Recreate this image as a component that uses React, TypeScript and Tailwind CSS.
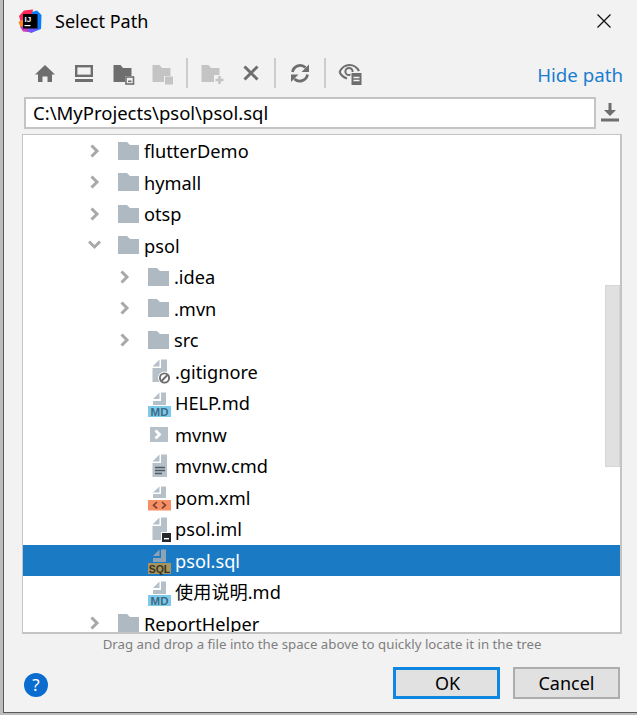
import React from 'react';

const FONT = "font-['Noto_Sans','Noto_Sans_CJK_SC',sans-serif]";

type Kind = 'folder' | 'ignore' | 'md' | 'shell' | 'cmd' | 'xml' | 'iml' | 'sql';

interface TreeRow {
  name: string;
  depth: 0 | 1;
  kind: Kind;
  arrow?: 'right' | 'down';
  selected?: boolean;
}

const rows: TreeRow[] = [
  { name: 'flutterDemo', depth: 0, kind: 'folder', arrow: 'right' },
  { name: 'hymall', depth: 0, kind: 'folder', arrow: 'right' },
  { name: 'otsp', depth: 0, kind: 'folder', arrow: 'right' },
  { name: 'psol', depth: 0, kind: 'folder', arrow: 'down' },
  { name: '.idea', depth: 1, kind: 'folder', arrow: 'right' },
  { name: '.mvn', depth: 1, kind: 'folder', arrow: 'right' },
  { name: 'src', depth: 1, kind: 'folder', arrow: 'right' },
  { name: '.gitignore', depth: 1, kind: 'ignore' },
  { name: 'HELP.md', depth: 1, kind: 'md' },
  { name: 'mvnw', depth: 1, kind: 'shell' },
  { name: 'mvnw.cmd', depth: 1, kind: 'cmd' },
  { name: 'pom.xml', depth: 1, kind: 'xml' },
  { name: 'psol.iml', depth: 1, kind: 'iml' },
  { name: 'psol.sql', depth: 1, kind: 'sql', selected: true },
  { name: '使用说明.md', depth: 1, kind: 'md' },
  { name: 'ReportHelper', depth: 0, kind: 'folder', arrow: 'right' },
];

const Page = ({ bottom, fill = '#b6c0c8' }: { bottom: number; fill?: string }) => (
  <>
    <path d={`M14 1.5H20V${bottom}H5.5V10H14Z`} fill={fill} />
    <path d="M5.5 8.5L12.5 1.5V8.5Z" fill={fill} />
  </>
);

const FileIcon = ({ kind }: { kind: Kind }) => {
  const cls = 'w-[24px] h-[26px] shrink-0 overflow-visible';
  if (kind === 'folder') {
    return (
      <svg viewBox="0 0 24 26" className={cls}>
        <path d="M1 4H10L13 7H22V22H1Z" fill="#afb9c1" />
      </svg>
    );
  }
  if (kind === 'shell') {
    return (
      <svg viewBox="0 0 24 26" className={cls}>
        <rect x="3" y="6" width="18" height="15" fill="#b6c0c8" />
        <path d="M8.5 9.5L12.5 13.5L8.5 17.5" fill="none" stroke="#fff" strokeWidth="2.8" />
      </svg>
    );
  }
  if (kind === 'cmd') {
    return (
      <svg viewBox="0 0 24 26" className={cls}>
        <Page bottom={24} />
        <path d="M8 14.5H18M8 17.5H18M8 20.5H15" stroke="#4f5a63" strokeWidth="1.3" />
      </svg>
    );
  }
  if (kind === 'ignore') {
    return (
      <svg viewBox="0 0 24 26" className={cls}>
        <Page bottom={24} />
        <circle cx="17.5" cy="20" r="6.5" fill="#fff" />
        <circle cx="17.5" cy="20" r="4.6" fill="none" stroke="#6c6c6c" strokeWidth="1.9" />
        <path d="M14.5 23L20.5 17" stroke="#6c6c6c" strokeWidth="1.9" />
      </svg>
    );
  }
  if (kind === 'iml') {
    return (
      <svg viewBox="0 0 24 26" className={cls}>
        <Page bottom={24} />
        <rect x="14" y="16" width="11" height="10" fill="#fff" />
        <rect x="15" y="17" width="9" height="9" fill="#26292c" />
        <rect x="17" y="22" width="5" height="1.4" fill="#fff" />
      </svg>
    );
  }
  if (kind === 'xml') {
    return (
      <svg viewBox="0 0 24 26" className={cls}>
        <path d="M14 2.5H19V14H6V10H14Z" fill="#b6c0c8" />
        <path d="M6 8.5L12.5 2.5V8.5Z" fill="#b6c0c8" />
        <rect x="1" y="16" width="23" height="10.5" fill="#f58f65" />
        <path d="M10 18L6.5 21.2L10 24.4M15 18L18.5 21.2L15 24.4" fill="none" stroke="#7c4128" strokeWidth="1.6" />
      </svg>
    );
  }
  const sql = kind === 'sql';
  return (
    <svg viewBox="0 0 24 26" className={cls}>
      <path d="M14 2.5H19V15H6V11H14Z" fill={sql ? '#8fa3b5' : '#b6c0c8'} />
      <path d="M6 9L12.5 2.5V9Z" fill={sql ? '#8fa3b5' : '#b6c0c8'} />
      <rect x="1" y="16" width="23" height="11" fill={sql ? '#a8945f' : '#7ecbe9'} />
      <text
        x="12.5"
        y="25.5"
        textAnchor="middle"
        fontFamily="Liberation Sans, sans-serif"
        fontWeight="700"
        fontSize={sql ? 10.5 : 11.5}
        fill={sql ? '#3a3522' : '#3d6a86'}
      >
        {sql ? 'SQL' : 'MD'}
      </text>
    </svg>
  );
};

const Arrow = ({ dir }: { dir?: 'right' | 'down' }) => (
  <span className="w-[14px] h-[14px] mr-[15px] shrink-0">
    {dir && (
      <svg viewBox="0 0 14 14" className="w-[14px] h-[14px]">
        <path
          d={dir === 'right' ? 'M3.5 1.5L9 7L3.5 12.5' : 'M1 3.5L6.5 9L12 3.5'}
          fill="none"
          stroke="#a8a8a8"
          strokeWidth="3"
        />
      </svg>
    )}
  </span>
);

const ToolIcon = ({ children }: { children: React.ReactNode }) => (
  <span className="w-[39px] h-[24px] flex items-center justify-center shrink-0">
    <svg viewBox="0 0 24 24" className="w-[24px] h-[24px]">
      {children}
    </svg>
  </span>
);

const Logo = () => (
  <svg viewBox="0 0 24 24" className="w-[24px] h-[24px] shrink-0">
    <path d="M1 7L6 1.5L15 0.5L13 12L3 14Z" fill="#fe2857" />
    <path d="M0.5 13L6 10L8 21L2.5 18Z" fill="#fc801d" />
    <path d="M2 18L10 15L14 23.5L5 22.5Z" fill="#c53fb8" />
    <path d="M14 3L19 1.5L23.5 6L23 20L14 23.5Z" fill="#087cfa" />
    <path d="M9 21L14 16L21 20L13 24Z" fill="#6b57ff" />
    <rect x="5" y="5" width="14.5" height="14.5" fill="#000" />
    <text x="6.5" y="13" fontFamily="Liberation Sans, sans-serif" fontWeight="700" fontSize="8" fill="#fff">
      IJ
    </text>
    <rect x="6.5" y="16" width="6" height="1.2" fill="#fff" />
  </svg>
);

export default function App() {
  return (
    <div className={`w-[637px] h-[715px] bg-[#bdbdbd] pl-[3px] pb-[2px] overflow-hidden ${FONT}`}>
      <div className="h-full flex flex-col bg-[#f2f2f2] border-l border-b border-[#5a5a5a]">
        {/* title bar */}
        <div className="h-[42px] shrink-0 flex items-center pl-[14px] pr-[25px]">
          <Logo />
          <span className="ml-[13px] text-[18px] text-black">Select Path</span>
          <svg viewBox="0 0 16 16" className="w-[16px] h-[16px] ml-auto">
            <path d="M1.5 1.5L14.5 14.5M14.5 1.5L1.5 14.5" stroke="#111" strokeWidth="1.3" />
          </svg>
        </div>

        {/* toolbar */}
        <div className="h-[55px] shrink-0 pt-[7px] pl-[21px] pr-[14px] flex items-center">
          <ToolIcon>
            <path d="M2 13.5L12 4L22 13.5H19V21H14.5V15.5H9.5V21H5V13.5Z" fill="#6e6e6e" />
          </ToolIcon>
          <ToolIcon>
            <rect x="4.2" y="5.2" width="15.6" height="9.6" fill="none" stroke="#6e6e6e" strokeWidth="2.4" />
            <rect x="3" y="18" width="18" height="3" fill="#6e6e6e" />
          </ToolIcon>
          <ToolIcon>
            <path d="M2.5 4H9.5L12 7H20.5V15H14V21H2.5Z" fill="#6e6e6e" />
            <rect x="15" y="16" width="7.5" height="7" fill="none" stroke="#6e6e6e" strokeWidth="1.6" />
            <rect x="17" y="19.5" width="3.5" height="1.6" fill="#6e6e6e" />
          </ToolIcon>
          <ToolIcon>
            <path d="M2.5 4H9.5L12 7H20.5V15H14V21H2.5Z" fill="#c4c4c4" />
            <rect x="15" y="15.5" width="8" height="8" fill="#c4c4c4" />
          </ToolIcon>
          <span className="w-[2px] h-[30px] ml-[5px] mr-[4px] bg-[#cdcdcd] shrink-0" />
          <ToolIcon>
            <path d="M1.5 4H8.5L11 7H19.5V14H14V21H1.5Z" fill="#c4c4c4" />
            <path d="M19.5 15V23M15.5 19H23.5" stroke="#c4c4c4" strokeWidth="2.4" />
          </ToolIcon>
          <ToolIcon>
            <path d="M5.5 5.5L18.5 18.5M18.5 5.5L5.5 18.5" stroke="#6e6e6e" strokeWidth="3" />
          </ToolIcon>
          <span className="w-[2px] h-[30px] ml-[4px] mr-[4px] bg-[#cdcdcd] shrink-0" />
          <ToolIcon>
            <path d="M4.5 11A7.8 7.8 0 0 1 17.5 6.5" fill="none" stroke="#6e6e6e" strokeWidth="2.8" />
            <path d="M21 3.5V11H13.5Z" fill="#6e6e6e" />
            <path d="M19.5 13.5A7.8 7.8 0 0 1 6.5 18" fill="none" stroke="#6e6e6e" strokeWidth="2.8" />
            <path d="M3 21V13.5H10.5Z" fill="#6e6e6e" />
          </ToolIcon>
          <span className="w-[2px] h-[30px] ml-[5px] mr-[4px] bg-[#cdcdcd] shrink-0" />
          <ToolIcon>
            <path
              d="M1.5 11C4 6 8 4 11.5 4C15.5 4 19 6.5 21 10M1.5 11C3 14 5.5 16.5 9 17.5"
              fill="none"
              stroke="#6e6e6e"
              strokeWidth="2.2"
            />
            <circle cx="11" cy="10.5" r="3.6" fill="none" stroke="#6e6e6e" strokeWidth="2" />
            <rect x="12.5" y="11" width="11" height="12.5" fill="#f2f2f2" />
            <rect x="13.5" y="12" width="10" height="12" fill="#6e6e6e" />
            <path d="M15.5 16.5H21.5M15.5 19.5H21.5" stroke="#f2f2f2" strokeWidth="1.3" />
          </ToolIcon>
          <span className="ml-auto pt-[4px] text-[18.7px] text-[#1a7dcf]">Hide path</span>
        </div>

        {/* path field */}
        <div className="h-[32px] shrink-0 flex items-center pl-[20px]">
          <div className="w-[572px] h-[32px] bg-white border-2 border-[#c4c4c4] pl-[7px] flex items-center text-[18.5px] text-black">
            C:\MyProjects\psol\psol.sql
          </div>
          <svg viewBox="0 0 20 20" className="w-[20px] h-[20px] ml-[4px] mb-[2px]">
            <path d="M8.5 1H11.5V8H16L10 14L4 8H8.5Z" fill="#6e6e6e" />
            <rect x="1" y="16.5" width="18" height="3" fill="#6e6e6e" />
          </svg>
        </div>

        {/* tree */}
        <div className="relative ml-[18px] mt-[5px] w-[600px] h-[500px] shrink-0 bg-white border-t border-l border-[#c4c4c4] border-r-2 border-b-2 overflow-hidden">
          {rows.map((row) => (
            <div
              key={row.name}
              className={`h-[31.5px] flex items-center ${row.depth === 0 ? 'pl-[65px]' : 'pl-[95px]'} ${
                row.selected ? 'bg-[#1a7bc4] text-white' : 'text-black'
              } text-[18.2px]`}
            >
              {row.kind === 'folder' || row.depth === 0 ? (
                <Arrow dir={row.arrow} />
              ) : (
                <span className="w-[29px] shrink-0" />
              )}
              <FileIcon kind={row.kind} />
              <span className={`whitespace-nowrap pt-[2px] ${row.kind === 'folder' ? 'ml-[3px]' : 'ml-[4px]'}`}>
                {row.name}
              </span>
            </div>
          ))}
          {/* scrollbar */}
          <div className="absolute right-0 top-[150px] w-[15px] h-[182px] bg-[#e0e0e0] border border-[#d6d6d6]" />
        </div>

        {/* hint */}
        <div className="ml-[18px] w-[600px] h-[22px] shrink-0 flex items-center justify-center text-[13.25px] text-[#7f7f7f]">
          Drag and drop a file into the space above to quickly locate it in the tree
        </div>

        {/* footer */}
        <div className="flex items-center pl-[20px] mt-[11px] h-[32px] shrink-0">
          <div className="w-[24px] h-[24px] mt-[4px] rounded-full bg-[#0a6ccf] text-white text-[17px] flex items-center justify-center">
            ?
          </div>
          <button className="ml-[345px] w-[107px] h-[32px] pl-[2px] bg-[#e1e1e1] border-[3px] border-[#0f86e0] text-[18px] text-black">
            OK
          </button>
          <button className="ml-[13px] w-[107px] h-[32px] bg-[#e1e1e1] border-2 border-[#adadad] text-[18px] text-black">
            Cancel
          </button>
        </div>
      </div>
    </div>
  );
}
